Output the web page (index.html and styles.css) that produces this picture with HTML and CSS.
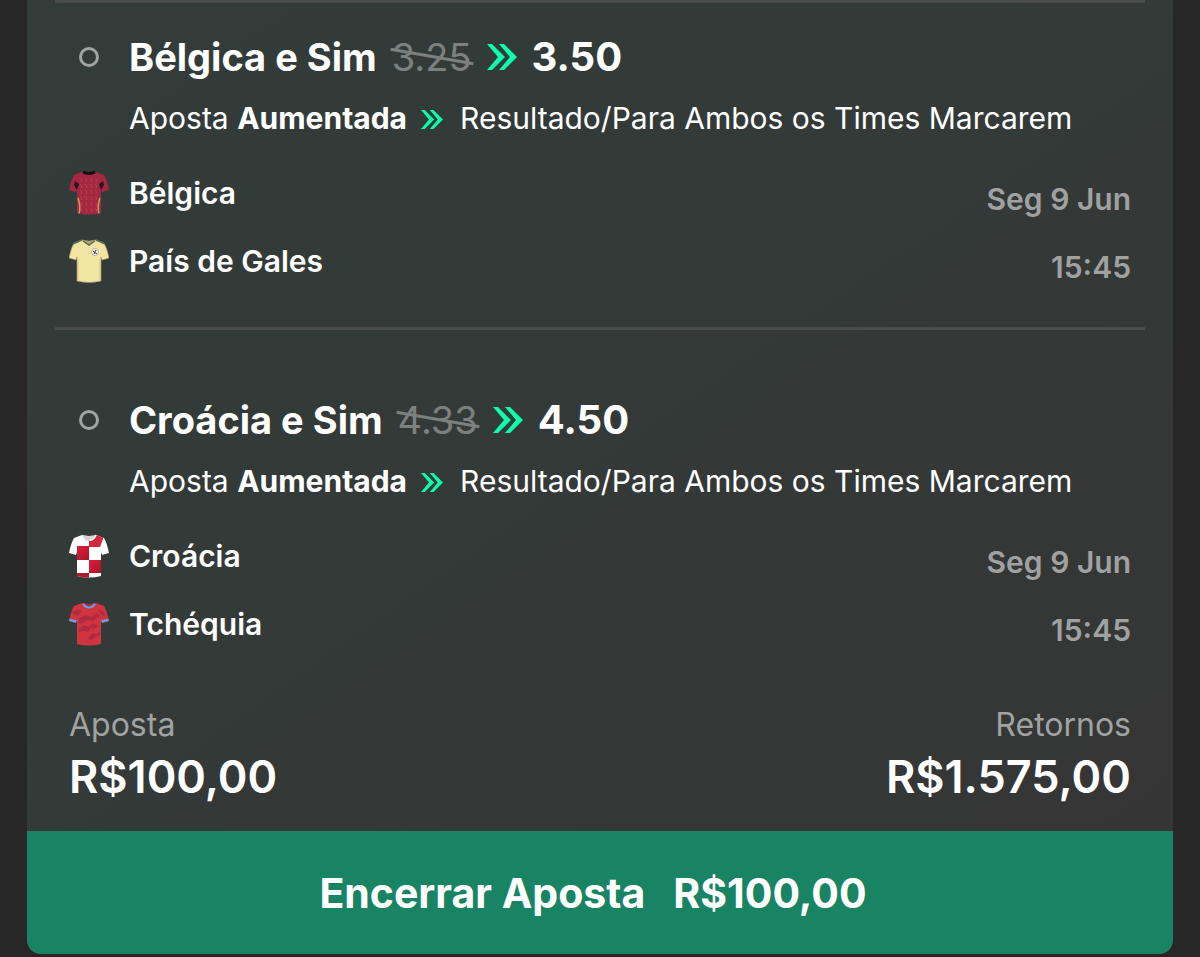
FILE: index.html
```
<!DOCTYPE html>
<html lang="pt-BR">
<head>
    <meta charset="utf-8" />
    <title>Minhas Apostas</title>
    <link rel="stylesheet" href="styles.css">
</head>
<body>
    <svg width="0" height="0" class="defs" aria-hidden="true">
        <symbol id="arrows" viewBox="0 0 30 26">
            <path d="M0 0h5l13 13L5 26H0l11-13zM12 0h5l13 13L17 26h-5l11-13z" fill="#0dfcae" />
        </symbol>
        <symbol id="shirt" viewBox="0 0 40 44">
            <path d="M13 1Q20 3 27 1L35 4Q38 9 40 19L33 21L32 18V42Q20 45 8 42V18L7 21L0 19Q2 9 5 4Z" />
        </symbol>
        <clipPath id="shirtClip">
            <path d="M13 1Q20 3 27 1L35 4Q38 9 40 19L33 21L32 18V42Q20 45 8 42V18L7 21L0 19Q2 9 5 4Z" />
        </clipPath>
        <pattern id="zigzag" width="5" height="6" patternUnits="userSpaceOnUse">
            <path d="M1 1l2 2-1 2" fill="none" stroke="#b94450" stroke-width="0.8" />
        </pattern>
        <linearGradient id="redFade" x1="0" y1="0" x2="1" y2="1">
            <stop offset="0" stop-color="#dc2038" />
            <stop offset="1" stop-color="#a81428" />
        </linearGradient>
    </svg>

    <main class="card">
        <section class="bet first">
            <h2 class="title">
                <span class="dot"></span>
                <span>Bélgica e Sim</span>
                <s class="old">3.25</s>
                <svg class="arrows"><use href="#arrows" /></svg>
                <span class="new">3.50</span>
            </h2>
            <p class="market">Aposta <b>Aumentada</b><svg class="arrows"><use href="#arrows" /></svg>Resultado/Para Ambos os Times Marcarem</p>
            <div class="match">
                <div class="teams">
                    <div class="team">
                        <svg class="kit" viewBox="0 0 40 44">
                            <g clip-path="url(#shirtClip)">
                                <rect width="40" height="44" fill="#a52843" />
                                <rect x="9" y="5" width="22" height="38" fill="url(#zigzag)" />
                                <path d="M6 10l4 3-2 6-3-5zM34 10l-4 3 2 6 3-5z" fill="#25171b" />
                                <path d="M9 27q3 8 1 16M31 27q-3 8-1 16" fill="none" stroke="#c99a55" stroke-width="1.5" />
                            </g>
                            <path d="M14 1q6 3 12 0" fill="none" stroke="#160f10" stroke-width="3" />
                        </svg>
                        <span>Bélgica</span>
                    </div>
                    <div class="team">
                        <svg class="kit" viewBox="0 0 40 44">
                            <use href="#shirt" fill="#f2e4a2" stroke="#a79a6c" stroke-width="0.6" />
                            <path d="M4 5l9-4M36 5l-9-4" stroke="#58705a" stroke-width="1.5" />
                            <path d="M14 2l6 4 6-4" fill="#aaa174" stroke="#5d6b51" stroke-width="1.5" />
                            <path d="M9 20v22M31 20v22" stroke="#d3c68c" stroke-width="1" />
                            <circle cx="26" cy="13" r="3.5" fill="#f4f1e6" stroke="#a39d95" stroke-width="0.7" />
                            <path d="M24 12l4 3M27 11l-2 4" stroke="#5b3942" stroke-width="1" />
                        </svg>
                        <span>País de Gales</span>
                    </div>
                </div>
                <div class="when">
                    <div>Seg 9 Jun</div>
                    <div>15:45</div>
                </div>
            </div>
        </section>

        <section class="bet">
            <h2 class="title">
                <span class="dot"></span>
                <span>Croácia e Sim</span>
                <s class="old">4.33</s>
                <svg class="arrows"><use href="#arrows" /></svg>
                <span class="new">4.50</span>
            </h2>
            <p class="market">Aposta <b>Aumentada</b><svg class="arrows"><use href="#arrows" /></svg>Resultado/Para Ambos os Times Marcarem</p>
            <div class="match">
                <div class="teams">
                    <div class="team">
                        <svg class="kit" viewBox="0 0 40 44">
                            <g clip-path="url(#shirtClip)">
                                <rect width="40" height="44" fill="#fff" />
                                <path d="M20 0h14v5l-3 8H20z" fill="#d3273c" />
                                <rect x="8" y="12" width="12" height="14" fill="url(#redFade)" />
                                <rect x="20" y="26" width="12" height="13" fill="url(#redFade)" />
                                <rect x="8" y="39" width="12" height="5" fill="#b41a2e" />
                            </g>
                            <path d="M13 1q7 2 14 0l-3 5q-4 2-8 0z" fill="#d5d3d5" />
                            <path d="M21 6q4 0 6-5" fill="none" stroke="#fff" stroke-width="1.5" />
                        </svg>
                        <span>Croácia</span>
                    </div>
                    <div class="team">
                        <svg class="kit" viewBox="0 0 40 44">
                            <g clip-path="url(#shirtClip)">
                                <rect width="40" height="44" fill="#d0353f" />
                                <path d="M3 11l6-4 4 2-5 5zM10 16l7-3 5 2 6-4 3 3-7 5-6-1-5 4-4-1zM10 27l5-4 4 2 5-4 5 3-4 3-3-1-3 4-5-1-4 2zM19 36l5-5 3 1 4-2v3l-5 2-3 3-4-1zM29 7l6 3 1 5-5-3z" fill="#b02b42" />
                                <path d="M0 18l8 2M40 18l-8 2" stroke="#6f9be0" stroke-width="3" />
                            </g>
                            <path d="M14 2q6 7 12 0" fill="#a92843" stroke="#6f9be0" stroke-width="2" />
                        </svg>
                        <span>Tchéquia</span>
                    </div>
                </div>
                <div class="when">
                    <div>Seg 9 Jun</div>
                    <div>15:45</div>
                </div>
            </div>
        </section>

        <dl class="totals">
            <div>
                <dt>Aposta</dt>
                <dd>R$100,00</dd>
            </div>
            <div class="returns">
                <dt>Retornos</dt>
                <dd>R$1.575,00</dd>
            </div>
        </dl>

        <button class="cashout" type="button"><span>Encerrar Aposta</span><span>R$100,00</span></button>
    </main>
</body>
</html>
```
FILE: styles.css
```
* {
    box-sizing: border-box;
}

body {
    margin: 0;
    background-color: #272727;
    color: #fff;
    font-family: Inter, "Liberation Sans", sans-serif;
    font-size: 30px;
    line-height: 40px;
}

h2, p, dl, dd {
    margin: 0;
}

.defs {
    position: absolute;
}

.card {
    margin: 0 27px 3px;
    border-radius: 0 0 14px 14px;
    overflow: hidden;
    background: linear-gradient(145deg, #323c39 0%, #333a38 45%, #353636 80%, #363535 100%);
}

.bet {
    margin: 0 28px;
    padding: 65px 14px 32px;
    border-top: 3px solid #494d4c;
}

.first {
    padding-top: 29px;
}

.title {
    display: flex;
    align-items: center;
    gap: 15px;
    font-size: 38px;
    font-weight: 700;
    line-height: 50px;
}

.dot {
    width: 20px;
    height: 20px;
    margin: 0 15px 0 10px;
    border: 3px solid #a0a4a2;
    border-radius: 50%;
}

/* the old price is crossed by a slanted line */
.old {
    position: relative;
    color: #7c817f;
    font-weight: 400;
    text-decoration: none;
}

.old::after {
    content: "";
    position: absolute;
    left: -2px;
    right: -2px;
    top: 23px;
    height: 3px;
    background-color: #7c817f;
    transform: rotate(10deg);
}

.new {
    font-size: 40px;
}

.title .arrows {
    width: 30px;
    height: 26px;
}

.market {
    margin: 16px 0 21px 60px;
}

.market b {
    font-weight: 700;
}

.market .arrows {
    width: 22px;
    height: 19px;
    margin: 0 17px 0 14px;
}

.match {
    display: flex;
    justify-content: space-between;
    line-height: 68px;
}

.team {
    display: flex;
    align-items: center;
    gap: 20px;
    font-weight: 600;
}

.kit {
    width: 40px;
    height: 44px;
}

.when {
    margin: 6px 0 -6px;
    color: #a0a1a1;
    font-weight: 600;
    text-align: right;
}

.totals {
    display: flex;
    justify-content: space-between;
    margin: 15px 42px 0;
    padding-bottom: 26px;
}

.totals dt {
    color: #a0a3a2;
    font-size: 32px;
}

.totals dd {
    margin-top: 4px;
    font-size: 45px;
    font-weight: 600;
    line-height: 56px;
}

.returns {
    text-align: right;
}

.cashout {
    display: flex;
    justify-content: center;
    align-items: center;
    gap: 28px;
    width: 100%;
    height: 123px;
    padding: 0 14px 0 0;
    border: 0;
    background-color: #188463;
    color: #fff;
    font: 700 41px/50px Inter, "Liberation Sans", sans-serif;
    cursor: pointer;
}
```
